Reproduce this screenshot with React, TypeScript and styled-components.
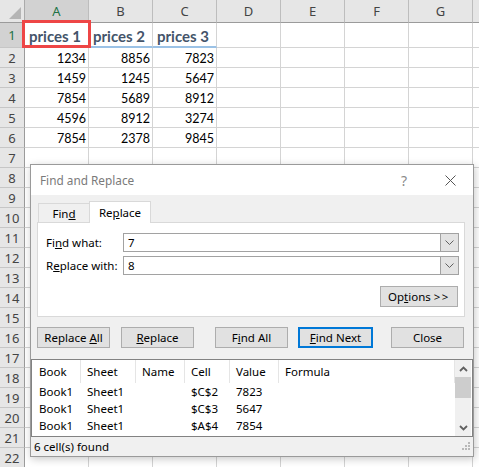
import React from 'react';
import styled, { createGlobalStyle, css } from 'styled-components';

const GlobalStyle = createGlobalStyle`
  html, body {
    margin: 0;
    padding: 0;
    background: #ffffff;
  }
  body {
    font-family: 'Noto Sans', 'Liberation Sans', sans-serif;
    overflow: hidden;
  }
`;

const COLS = ['A', 'B', 'C', 'D', 'E', 'F', 'G', ''];
const ROW_COUNT = 22;

const sheetData: Record<number, string[]> = {
  1: ['prices 1', 'prices 2', 'prices 3'],
  2: ['1234', '8856', '7823'],
  3: ['1459', '1245', '5647'],
  4: ['7854', '5689', '8912'],
  5: ['4596', '8912', '3274'],
  6: ['7854', '2378', '9845'],
};

const results = [
  ['Book1', 'Sheet1', '', '$C$2', '7823', ''],
  ['Book1', 'Sheet1', '', '$C$3', '5647', ''],
  ['Book1', 'Sheet1', '', '$A$4', '7854', ''],
];

const StylePage = styled.div`
  position: relative;
  width: 479px;
  height: 467px;
  overflow: hidden;
`;

const StyleSheet = styled.div`
  display: grid;
  grid-template-columns: 25px repeat(7, 64px) 1fr;
  grid-template-rows: 23px 25px repeat(21, 20px);
`;

const StyleCorner = styled.div`
  position: relative;
  background: #e6e6e6;
  border-right: 1px solid #ababab;
  border-bottom: 1px solid #9b9b9b;

  &::after {
    content: '';
    position: absolute;
    right: 3px;
    bottom: 3px;
    width: 12px;
    height: 12px;
    background: #b5b5b5;
    clip-path: polygon(100% 0, 100% 100%, 0 100%);
  }
`;

const StyleColHead = styled.div<{ $selected?: boolean }>`
  display: flex;
  justify-content: center;
  align-items: center;
  background: ${(p) => (p.$selected ? '#d2d2d2' : '#e6e6e6')};
  color: ${(p) => (p.$selected ? '#217346' : '#444444')};
  border-right: 1px solid #bdbdbd;
  border-bottom: ${(p) => (p.$selected ? '2px solid #217346' : '1px solid #9b9b9b')};
  font-family: 'Noto Sans', sans-serif;
  font-size: 13px;
  box-sizing: border-box;
`;

const StyleRowHead = styled.div<{ $selected?: boolean }>`
  display: flex;
  justify-content: center;
  align-items: center;
  background: ${(p) => (p.$selected ? '#d2d2d2' : '#e6e6e6')};
  color: ${(p) => (p.$selected ? '#217346' : '#444444')};
  border-right: 1px solid #9b9b9b;
  border-bottom: 1px solid #c6c6c6;
  font-family: 'Noto Sans', sans-serif;
  font-size: 13px;
  box-sizing: border-box;
`;

const StyleCell = styled.div<{ $heading?: boolean }>`
  display: flex;
  align-items: center;
  justify-content: flex-end;
  padding: 2px 2px 0 4px;
  border-right: 1px solid #d4d4d4;
  border-bottom: 1px solid #d4d4d4;
  font-family: 'Lato', 'Liberation Sans', sans-serif;
  font-size: 12.5px;
  color: #000000;
  box-sizing: border-box;
  white-space: nowrap;
  overflow: hidden;

  ${(p) =>
    p.$heading &&
    css`
      justify-content: flex-start;
      font-size: 15px;
      font-weight: 700;
      color: #44546a;
      border-bottom: 2px solid #9bc2e6;
    `}
`;

const StyleRedBox = styled.div`
  position: absolute;
  left: 22px;
  top: 20px;
  width: 69px;
  height: 28px;
  border: 3px solid #ee4646;
  box-sizing: border-box;
`;

const StyleDialog = styled.div`
  position: absolute;
  left: 30px;
  top: 164px;
  width: 442px;
  display: flex;
  flex-direction: column;
  background: #f0f0f0;
  border: 1px solid #9a9a9a;
  box-shadow: 1px 2px 8px rgba(0, 0, 0, 0.22);
  font-family: 'Noto Sans', 'Liberation Sans', sans-serif;
  font-size: 11.5px;
  color: #000000;
`;

const StyleTitleBar = styled.div`
  display: flex;
  align-items: center;
  height: 30px;
  padding-left: 9px;
  background: #ffffff;
`;

const StyleTitle = styled.span`
  flex: 1;
  color: #7a7a7a;
  font-size: 11.8px;
`;

const StyleTitleButton = styled.div`
  width: 46px;
  height: 30px;
  display: flex;
  justify-content: center;
  align-items: center;
  color: #8a8a8a;
  font-size: 14px;
`;

const StyleTop = styled.div`
  padding: 6px 8px 0 6px;
`;

const StyleTabStrip = styled.div`
  display: flex;
  align-items: flex-end;
  height: 21px;
  padding-left: 1px;
`;

const StyleTab = styled.div<{ $active?: boolean }>`
  position: relative;
  display: flex;
  justify-content: center;
  align-items: center;
  box-sizing: border-box;
  border: 1px solid #d9d9d9;
  border-bottom: none;
  ${(p) =>
    p.$active
      ? css`
          width: 62px;
          height: 22px;
          margin-bottom: -1px;
          margin-left: -1px;
          background: #ffffff;
          z-index: 1;
        `
      : css`
          width: 52px;
          height: 19px;
          background: #f0f0f0;
        `}
`;

const StylePanel = styled.div`
  display: flex;
  flex-direction: column;
  gap: 4px;
  height: 95px;
  box-sizing: border-box;
  padding: 10px 5px 9px 8px;
  background: #ffffff;
  border: 1px solid #d9d9d9;
`;

const StyleFieldRow = styled.div`
  display: grid;
  grid-template-columns: 77px 1fr;
  align-items: center;
`;

const StyleCombo = styled.div`
  display: flex;
  height: 19px;
  box-sizing: border-box;
  border: 1px solid #a2a2a2;
  background: #ffffff;
`;

const StyleComboText = styled.div`
  flex: 1;
  display: flex;
  align-items: center;
  padding-left: 4px;
`;

const StyleComboButton = styled.div`
  width: 17px;
  display: flex;
  justify-content: center;
  align-items: center;
  background: #e3e3e3;
  border-left: 1px solid #a2a2a2;
`;

const StyleOptionsRow = styled.div`
  display: flex;
  justify-content: flex-end;
  margin-top: 7px;
  padding-right: 1px;
`;

const StyleButton = styled.div<{ $width?: number; $gap?: number; $default?: boolean }>`
  width: ${(p) => p.$width ?? 73}px;
  height: 21px;
  margin-left: ${(p) => p.$gap ?? 0}px;
  display: flex;
  justify-content: center;
  align-items: center;
  box-sizing: border-box;
  background: #e1e1e1;
  border: ${(p) => (p.$default ? '2px solid #0078d7' : '1px solid #adadad')};
  white-space: pre;
`;

const StyleChevrons = styled.span`
  letter-spacing: 1.5px;
`;

const StyleButtonRow = styled.div`
  display: flex;
  margin-top: 10px;
`;

const StyleResults = styled.div`
  display: flex;
  height: 78px;
  margin-top: 11px;
  box-sizing: border-box;
  background: #ffffff;
  border: 1px solid #828282;
`;

const StyleResultTable = styled.div`
  flex: 1;
  display: grid;
  grid-template-columns: 49px 55px 49px 45px 49px 1fr;
  grid-template-rows: 23px repeat(3, 17px);
  align-content: start;
`;

const StyleResultHead = styled.div<{ $first?: boolean }>`
  display: flex;
  align-items: center;
  padding-left: ${(p) => (p.$first ? 7 : 6)}px;
  border-right: 1px solid #e5e5e5;
`;

const StyleResultCell = styled.div<{ $first?: boolean }>`
  display: flex;
  align-items: center;
  padding-left: ${(p) => (p.$first ? 7 : 6)}px;
  white-space: nowrap;
`;

const StyleScrollbar = styled.div`
  width: 16px;
  margin-right: 1px;
  display: flex;
  flex-direction: column;
  background: #f0f0f0;
`;

const StyleScrollArrow = styled.div`
  height: 17px;
  display: flex;
  justify-content: center;
  align-items: center;
`;

const StyleScrollThumb = styled.div`
  height: 21px;
  background: #cdcdcd;
`;

const StyleScrollTrack = styled.div`
  flex: 1;
`;

const StyleStatusBar = styled.div`
  display: flex;
  align-items: center;
  justify-content: space-between;
  height: 19px;
  padding: 0 2px 0 3px;
`;

const CloseIcon: React.FC = () => (
  <svg width="11" height="11" viewBox="0 0 11 11">
    <path d="M0.5 0.5 L10.5 10.5 M10.5 0.5 L0.5 10.5" stroke="#555" strokeWidth="1" fill="none" />
  </svg>
);

const ChevronDown: React.FC = () => (
  <svg width="9" height="5" viewBox="0 0 9 5">
    <path d="M0.5 0.5 L4.5 4.5 L8.5 0.5" stroke="#606060" strokeWidth="1" fill="none" />
  </svg>
);

const ScrollChevron: React.FC<{ up?: boolean }> = ({ up }) => (
  <svg width="9" height="6" viewBox="0 0 9 6">
    <path
      d={up ? 'M1 5 L4.5 1.5 L8 5' : 'M1 1 L4.5 4.5 L8 1'}
      stroke="#606060"
      strokeWidth="1.8"
      fill="none"
    />
  </svg>
);

const Grip: React.FC = () => (
  <svg width="9" height="9" viewBox="0 0 9 9">
    <g fill="#b8b8b8">
      <rect x="6" y="0" width="2" height="2" />
      <rect x="3" y="3" width="2" height="2" />
      <rect x="6" y="3" width="2" height="2" />
      <rect x="0" y="6" width="2" height="2" />
      <rect x="3" y="6" width="2" height="2" />
      <rect x="6" y="6" width="2" height="2" />
    </g>
  </svg>
);

const Combo: React.FC<{ value: string }> = ({ value }) => (
  <StyleCombo>
    <StyleComboText>{value}</StyleComboText>
    <StyleComboButton>
      <ChevronDown />
    </StyleComboButton>
  </StyleCombo>
);

const Sheet: React.FC = () => {
  const rows = Array.from({ length: ROW_COUNT }, (_, i) => i + 1);
  return (
    <StyleSheet>
      <StyleCorner />
      {COLS.map((c, i) => (
        <StyleColHead key={c + i} $selected={c === 'A'}>
          {c}
        </StyleColHead>
      ))}
      {rows.map((r) => (
        <React.Fragment key={r}>
          <StyleRowHead $selected={r === 1}>{r}</StyleRowHead>
          {COLS.map((c, ci) => (
            <StyleCell key={c + ci} $heading={r === 1 && ci < 3}>
              {sheetData[r]?.[ci] ?? ''}
            </StyleCell>
          ))}
        </React.Fragment>
      ))}
    </StyleSheet>
  );
};

const FindReplaceDialog: React.FC = () => {
  const heads = ['Book', 'Sheet', 'Name', 'Cell', 'Value', 'Formula'];
  return (
    <StyleDialog>
      <StyleTitleBar>
        <StyleTitle>Find and Replace</StyleTitle>
        <StyleTitleButton>?</StyleTitleButton>
        <StyleTitleButton>
          <CloseIcon />
        </StyleTitleButton>
      </StyleTitleBar>

      <StyleTop>
        <StyleTabStrip>
          <StyleTab>
            <span>
              Fin<u>d</u>
            </span>
          </StyleTab>
          <StyleTab $active>
            <span>
              Re<u>p</u>lace
            </span>
          </StyleTab>
        </StyleTabStrip>
        <StylePanel>
          <StyleFieldRow>
            <span>
              Fi<u>n</u>d what:
            </span>
            <Combo value="7" />
          </StyleFieldRow>
          <StyleFieldRow>
            <span>
              R<u>e</u>place with:
            </span>
            <Combo value="8" />
          </StyleFieldRow>
          <StyleOptionsRow>
            <StyleButton $width={78}>
              <span>
                Op<u>t</u>ions <StyleChevrons>&gt;&gt;</StyleChevrons>
              </span>
            </StyleButton>
          </StyleOptionsRow>
        </StylePanel>

        <StyleButtonRow>
          <StyleButton>
            <span>
              Replace <u>A</u>ll
            </span>
          </StyleButton>
          <StyleButton $gap={11}>
            <span>
              <u>R</u>eplace
            </span>
          </StyleButton>
          <StyleButton $gap={21}>
            <span>
              F<u>i</u>nd All
            </span>
          </StyleButton>
          <StyleButton $gap={10} $width={75} $default>
            <span>
              <u>F</u>ind Next
            </span>
          </StyleButton>
          <StyleButton $gap={18}>
            <span>Close</span>
          </StyleButton>
        </StyleButtonRow>
      </StyleTop>

      <StyleResults>
        <StyleResultTable>
          {heads.map((h, i) => (
            <StyleResultHead key={h} $first={i === 0}>
              {h}
            </StyleResultHead>
          ))}
          {results.map((row, ri) =>
            row.map((v, ci) => (
              <StyleResultCell key={`${ri}-${ci}`} $first={ci === 0}>
                {v}
              </StyleResultCell>
            ))
          )}
        </StyleResultTable>
        <StyleScrollbar>
          <StyleScrollArrow>
            <ScrollChevron up />
          </StyleScrollArrow>
          <StyleScrollThumb />
          <StyleScrollTrack />
          <StyleScrollArrow>
            <ScrollChevron />
          </StyleScrollArrow>
        </StyleScrollbar>
      </StyleResults>

      <StyleStatusBar>
        <span>6 cell(s) found</span>
        <Grip />
      </StyleStatusBar>
    </StyleDialog>
  );
};

export default function App() {
  return (
    <>
      <GlobalStyle />
      <StylePage>
        <Sheet />
        <StyleRedBox />
        <FindReplaceDialog />
      </StylePage>
    </>
  );
}
